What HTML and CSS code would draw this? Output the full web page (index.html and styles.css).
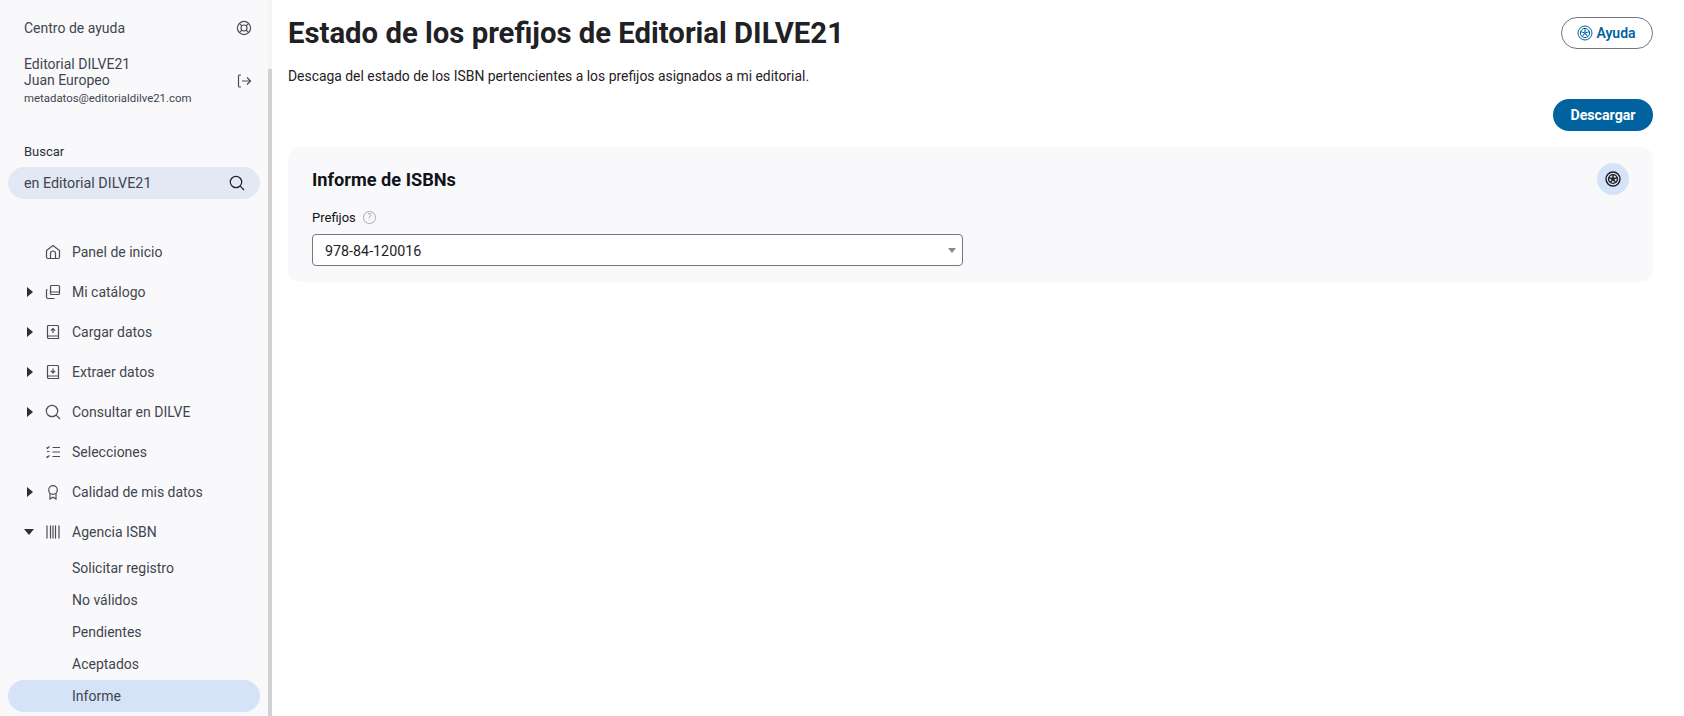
FILE: index.html
```html
<!DOCTYPE html>
<html lang="es">
<head>
    <meta charset="UTF-8">
    <meta name="viewport" content="width=device-width, initial-scale=1.0">
    <title>Estado de los prefijos</title>
    <link rel="stylesheet" href="styles.css">
</head>
<body>
    <aside class="sidebar">
        <div class="help-row">
            <span>Centro de ayuda</span>
            <svg class="icon" viewBox="0 0 16 16"><circle cx="8" cy="8" r="6.6"/><circle cx="8" cy="8" r="3"/><path d="M3.3 3.3l2.6 2.6M12.7 3.3l-2.6 2.6M3.3 12.7l2.6-2.6M12.7 12.7l-2.6-2.6"/></svg>
        </div>
        <div class="user-row">
            <div>
                <div>Editorial DILVE21</div>
                <div>Juan Europeo</div>
                <div class="user-mail">metadatos@editorialdilve21.com</div>
            </div>
            <svg class="icon" viewBox="0 0 16 16"><path d="M5 2H3.500a1 1 0 0 0-1 1v10a1 1 0 0 0 1 1H5M6 8h8.500M11 4.500L14.500 8 11 11.500"/></svg>
        </div>
        <div class="search-label">Buscar</div>
        <div class="search">
            <span>en Editorial DILVE21</span>
            <svg class="icon" viewBox="0 0 16 16"><circle cx="7" cy="7" r="5.700"/><path d="M11.200 11.200L15 15"/></svg>
        </div>

        <nav class="nav">
            <div class="nav-item">
                <span class="caret"></span>
                <svg class="icon nav-icon" viewBox="0 0 16 16"><path d="M1.500 6.500L8 1.500l6.500 5V13a1.500 1.500 0 0 1-1.500 1.500H3A1.500 1.500 0 0 1 1.500 13zM5.500 14.500V9.500a2.500 2.500 0 0 1 5 0v5"/></svg>
                Panel de inicio
            </div>
            <div class="nav-item">
                <span class="caret right"></span>
                <svg class="icon nav-icon" viewBox="0 0 16 16"><rect x="5.500" y="1.500" width="9" height="9" rx="1"/><path d="M5.500 8h9M2.500 5.500a1 1 0 0 0-1 1V13a1.500 1.500 0 0 0 1.500 1.500h6.500"/></svg>
                Mi catálogo
            </div>
            <div class="nav-item">
                <span class="caret right"></span>
                <svg class="icon nav-icon" viewBox="0 0 16 16"><path d="M2.500 12V2.500a1 1 0 0 1 1-1h9a1 1 0 0 1 1 1v12h-10a1.500 1.500 0 0 1-1-1.200V12h11M8 9V4.500M5.800 6.700L8 4.500l2.200 2.200"/></svg>
                Cargar datos
            </div>
            <div class="nav-item">
                <span class="caret right"></span>
                <svg class="icon nav-icon" viewBox="0 0 16 16"><path d="M2.500 12V2.500a1 1 0 0 1 1-1h9a1 1 0 0 1 1 1v12h-10a1.500 1.500 0 0 1-1-1.200V12h11M8 4.500V9M5.800 6.800L8 9l2.200-2.200"/></svg>
                Extraer datos
            </div>
            <div class="nav-item">
                <span class="caret right"></span>
                <svg class="icon nav-icon" viewBox="0 0 16 16"><circle cx="7" cy="7" r="5.700"/><path d="M11.200 11.200L15 15"/></svg>
                Consultar en DILVE
            </div>
            <div class="nav-item">
                <span class="caret"></span>
                <svg class="icon nav-icon" viewBox="0 0 16 16"><path d="M7.500 3.500H15M7.500 8H15M7.500 12.500H15M1.500 3.500l1 1 2-2.200M1.500 12.500l1 1 2-2.200M2 7.500h2.500"/></svg>
                Selecciones
            </div>
            <div class="nav-item">
                <span class="caret right"></span>
                <svg class="icon nav-icon" viewBox="0 0 16 16"><circle cx="8" cy="6" r="4.300"/><path d="M5 9.500V15l3-1.800L11 15V9.500"/></svg>
                Calidad de mis datos
            </div>
            <div class="nav-item">
                <span class="caret down"></span>
                <svg class="icon nav-icon" viewBox="0 0 16 16"><path d="M2 1.500v13M5.500 1.500v13M8 1.500v13M10.500 1.500v13M14 1.500v13"/></svg>
                Agencia ISBN
            </div>
            <div class="subnav">
                <div class="subnav-item">Solicitar registro</div>
                <div class="subnav-item">No válidos</div>
                <div class="subnav-item">Pendientes</div>
                <div class="subnav-item">Aceptados</div>
                <div class="subnav-item active">Informe</div>
            </div>
        </nav>
    </aside>
    <div class="scrollbar"><div class="scrollbar-thumb"></div></div>

    <main class="main">
        <div class="page-head">
            <h1>Estado de los prefijos de Editorial DILVE21</h1>
            <button class="btn-help">
                <svg class="wheel" viewBox="0 0 16 16"><circle cx="8" cy="8" r="7"/><circle cx="8" cy="8" r="4.600"/><circle cx="8" cy="8" r="1"/><path d="M8 3.400V7M3.600 6.600L7 7.700M5.300 11.700L7.400 8.800M10.700 11.700L8.600 8.800M12.400 6.600L9 7.700"/></svg>
                Ayuda
            </button>
        </div>
        <p class="intro">Descaga del estado de los ISBN pertencientes a los prefijos asignados a mi editorial.</p>
        <div class="actions">
            <button class="btn-primary">Descargar</button>
        </div>

        <section class="card">
            <div class="card-head">
                <h2>Informe de ISBNs</h2>
                <span class="card-badge">
                    <svg class="wheel dark" viewBox="0 0 16 16"><circle cx="8" cy="8" r="7"/><circle cx="8" cy="8" r="4.400"/><circle cx="8" cy="8" r="1"/><path d="M8 3.400V7M3.600 6.600L7 7.700M5.300 11.700L7.400 8.800M10.700 11.700L8.600 8.800M12.400 6.600L9 7.700"/></svg>
                </span>
            </div>
            <div class="field-label">
                Prefijos
                <span class="hint">?</span>
            </div>
            <div class="select">
                <span>978-84-120016</span>
                <span class="select-arrow"></span>
            </div>
        </section>
    </main>
</body>
</html>
```

FILE: styles.css
```css
* {
    box-sizing: border-box;
}
body {
    margin: 0;
    height: 716px;
    overflow: hidden;
    display: flex;
    background-color: #ffffff;
    color: #1f2124;
    font-family: Roboto, "Liberation Sans", sans-serif;
}

.icon {
    width: 16px;
    height: 16px;
    fill: none;
    stroke: #4a4e56;
    stroke-width: 1.200;
    flex-shrink: 0;
}

/* sidebar */
.sidebar {
    width: 268px;
    flex-shrink: 0;
    padding: 0 8px;
    background-color: #f9f9fc;
    color: #41454d;
    font-size: 14px;
}
.help-row {
    display: flex;
    justify-content: space-between;
    align-items: center;
    height: 16px;
    margin-top: 20px;
    padding: 0 8px 0 16px;
}
.user-row {
    display: flex;
    justify-content: space-between;
    align-items: center;
    margin-top: 20px;
    padding: 0 8px 0 16px;
    line-height: 16px;
}
.user-mail {
    font-size: 11.400px;
    margin-top: 2px;
}
.search-label {
    margin-top: 38px;
    padding-left: 16px;
    font-size: 13px;
    line-height: 16px;
    color: #2c3037;
}
.search {
    display: flex;
    justify-content: space-between;
    align-items: center;
    height: 32px;
    margin-top: 7px;
    padding: 0 15px 0 16px;
    border-radius: 16px;
    background-color: #e2e9f4;
    font-size: 14.300px;
}
.search .icon {
    stroke: #1f2124;
}

.nav {
    margin-top: 33px;
}
.nav-item {
    display: flex;
    align-items: center;
    height: 40px;
    padding-left: 19px;
}
.caret {
    width: 6px;
    height: 10px;
    flex-shrink: 0;
}
.caret.right {
    border-left: 6px solid #2c3037;
    border-top: 5px solid transparent;
    border-bottom: 5px solid transparent;
}
.caret.down {
    width: 10px;
    height: 6px;
    margin-left: -3px;
    margin-right: -1px;
    border-top: 6px solid #2c3037;
    border-left: 5px solid transparent;
    border-right: 5px solid transparent;
}
.nav-icon {
    margin: 0 11px 0 12px;
}
.subnav-item {
    display: flex;
    align-items: center;
    height: 32px;
    padding-left: 64px;
}
.subnav-item.active {
    border-radius: 16px;
    background-color: #d4e3f7;
}

.scrollbar {
    width: 4px;
    flex-shrink: 0;
    background-color: #f4f4f4;
    padding-top: 69px;
}
.scrollbar-thumb {
    height: 100%;
    background-color: #d2d2d2;
}

/* main */
.main {
    flex: 1;
    padding: 17px 31px 0 16px;
}
.page-head {
    display: flex;
    justify-content: space-between;
    align-items: center;
    height: 32px;
}
h1 {
    margin: 0;
    font-size: 29.300px;
    font-weight: 700;
}
.btn-help {
    display: flex;
    align-items: center;
    gap: 3px;
    width: 92px;
    height: 32px;
    justify-content: center;
    padding: 0 1px 0 0;
    border: 1px solid #74777f;
    border-radius: 16px;
    background-color: #ffffff;
    color: #00639f;
    font-family: inherit;
    font-size: 14px;
    font-weight: 600;
}
.wheel {
    width: 16px;
    height: 16px;
    fill: none;
    stroke: #00639f;
    stroke-width: 1;
}
.wheel.dark {
    stroke: #1a1c20;
    stroke-width: 1.400;
}
.intro {
    margin: 17px 0 0;
    font-size: 13.900px;
    line-height: 20px;
}
.actions {
    display: flex;
    justify-content: flex-end;
    margin-top: 13px;
}
.btn-primary {
    width: 100px;
    height: 32px;
    padding: 0;
    border: none;
    border-radius: 16px;
    background-color: #00639f;
    color: #ffffff;
    font-family: inherit;
    font-size: 14.200px;
    font-weight: 700;
}
.card {
    margin-top: 16px;
    height: 135px;
    padding: 16px 24px;
    border-radius: 12px;
    background-color: #f9f9fb;
}
.card-head {
    display: flex;
    justify-content: space-between;
    align-items: center;
    height: 32px;
}
h2 {
    margin: 0;
    font-size: 18.200px;
    font-weight: 700;
    color: #111318;
}
.card-badge {
    display: flex;
    align-items: center;
    justify-content: center;
    width: 32px;
    height: 32px;
    border-radius: 50%;
    background-color: #d4e3f7;
}
.field-label {
    display: flex;
    align-items: center;
    gap: 7px;
    height: 16px;
    margin-top: 14px;
    font-size: 13px;
    color: #111318;
}
.hint {
    width: 13px;
    height: 13px;
    border: 1px solid #a8abb0;
    border-radius: 50%;
    color: #a8abb0;
    font-size: 9px;
    line-height: 11px;
    text-align: center;
}
.select {
    display: flex;
    justify-content: space-between;
    align-items: center;
    width: 651px;
    height: 32px;
    margin-top: 9px;
    padding: 1px 6px 0 12px;
    border: 1px solid #74777f;
    border-radius: 4px;
    background-color: #ffffff;
    font-size: 14.300px;
}
.select-arrow {
    border-top: 5px solid #888888;
    border-left: 4px solid transparent;
    border-right: 4px solid transparent;
}
```
